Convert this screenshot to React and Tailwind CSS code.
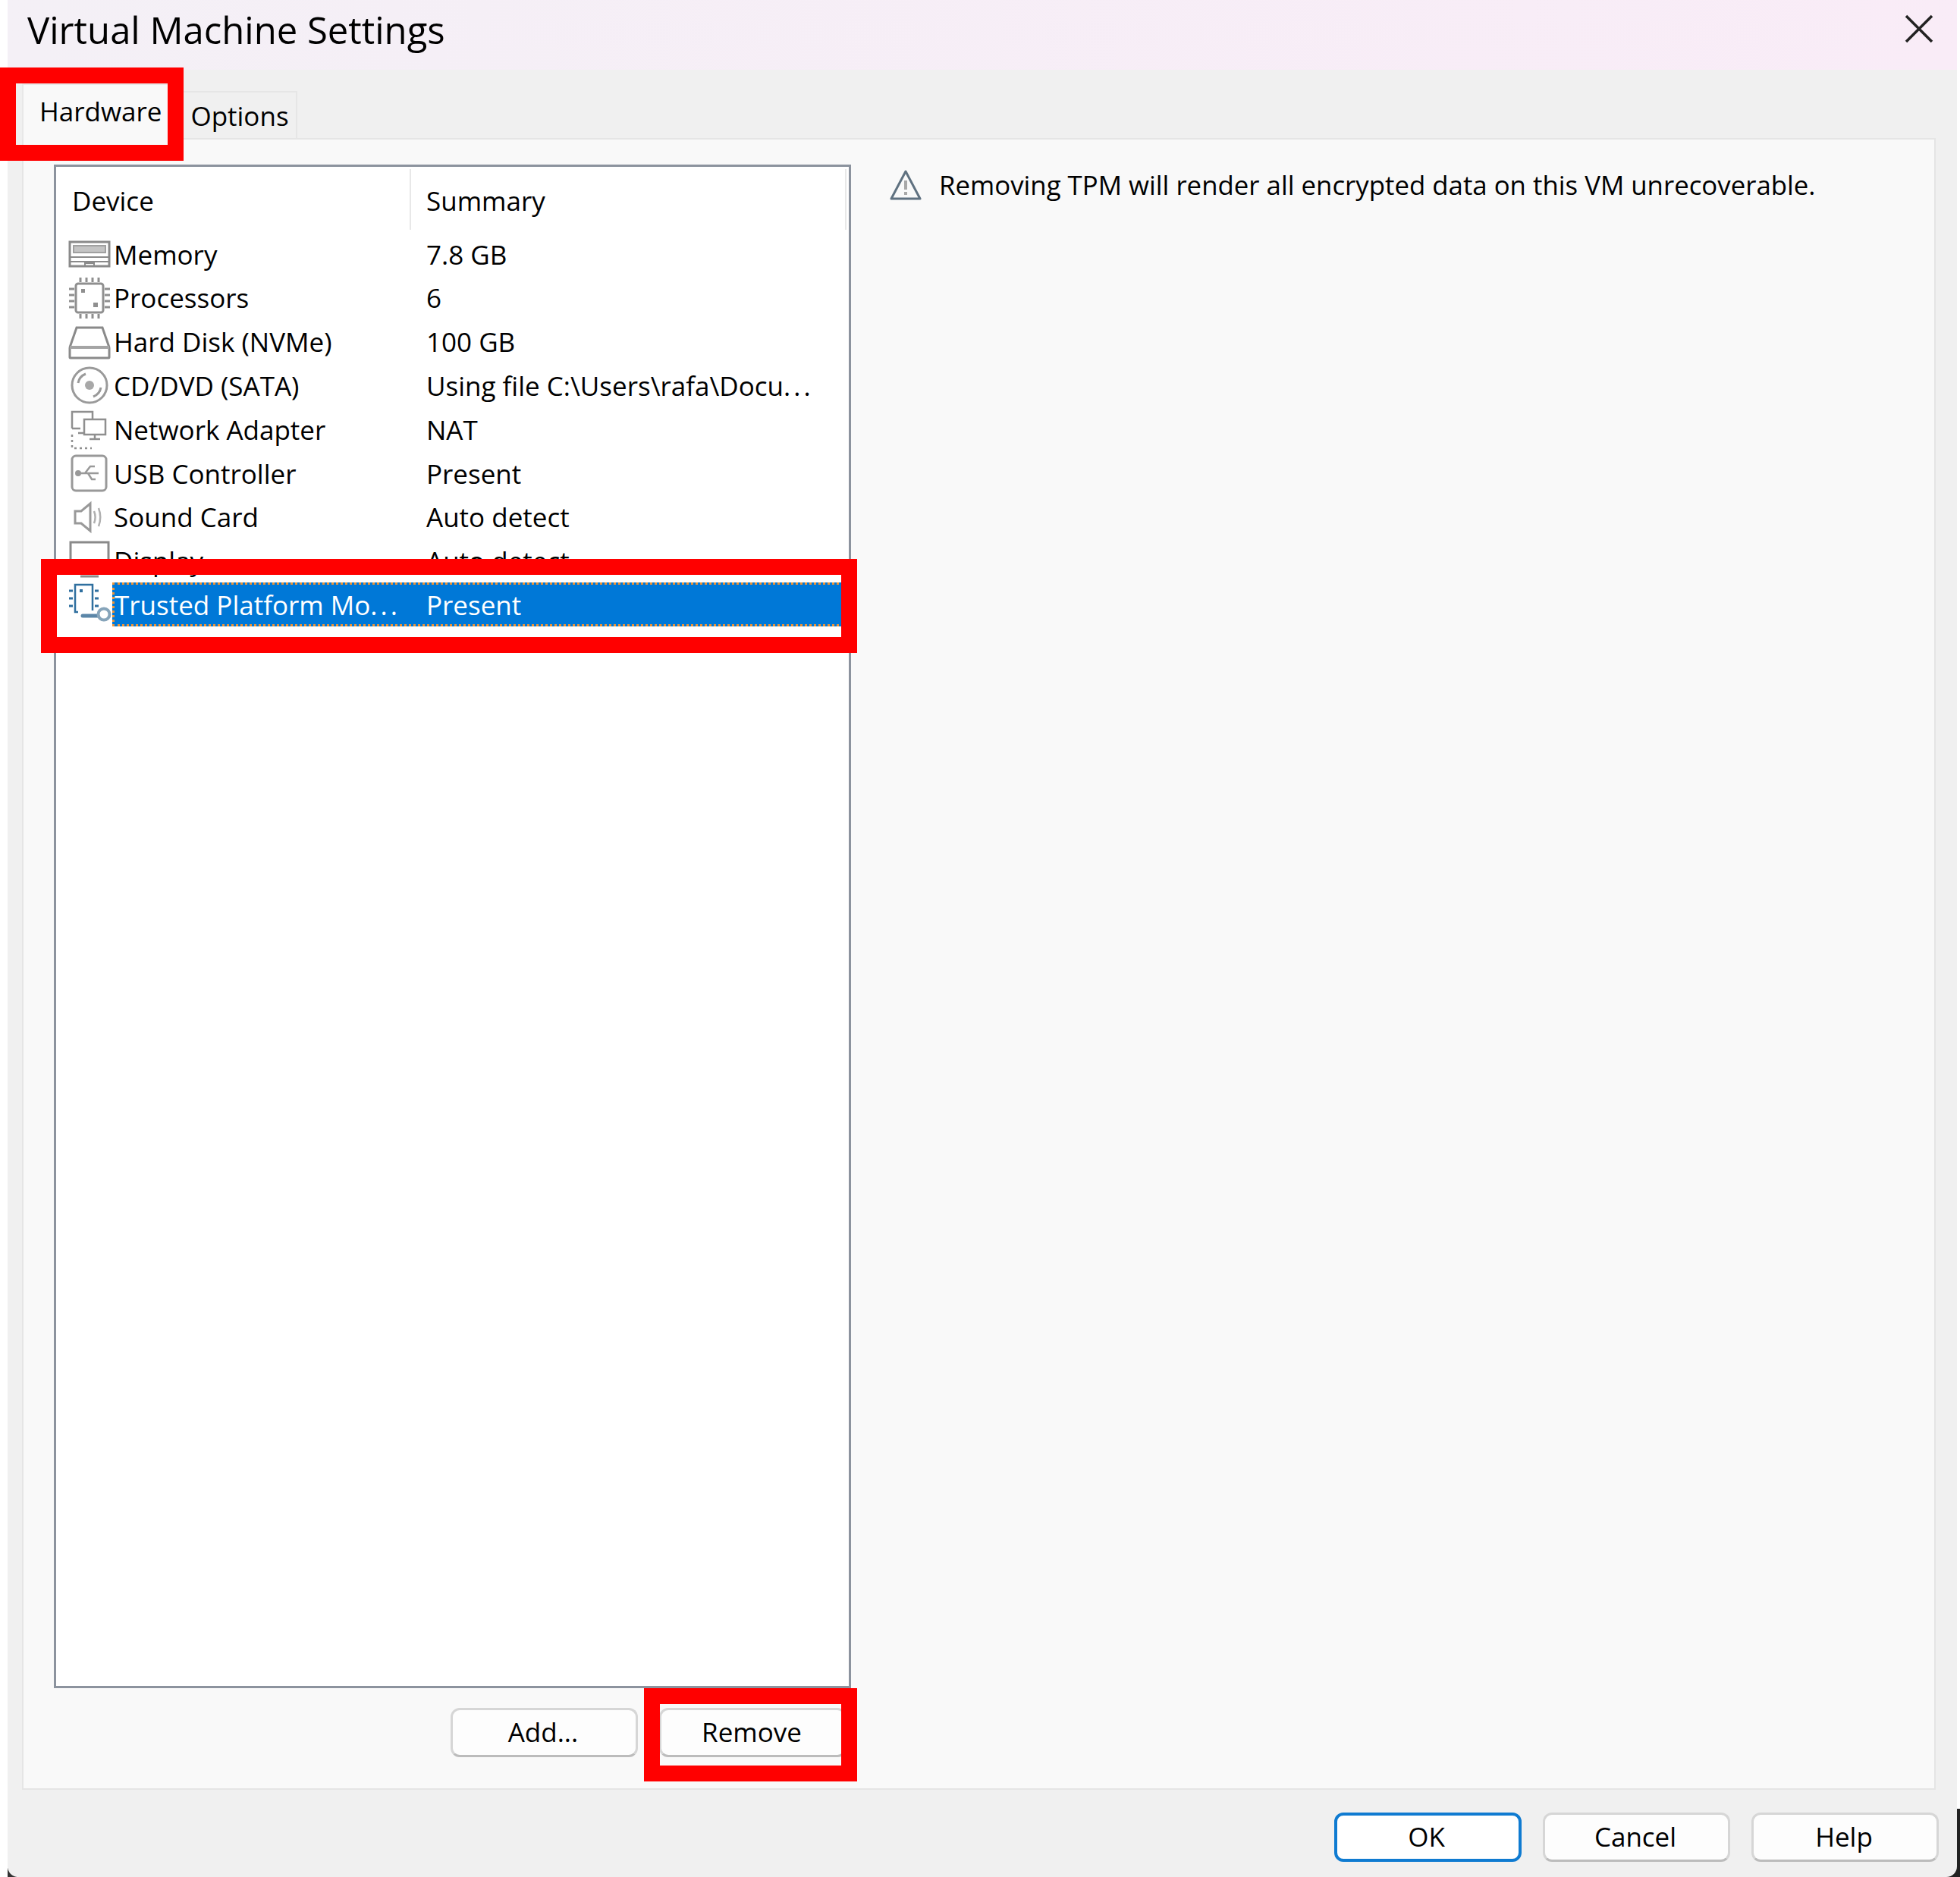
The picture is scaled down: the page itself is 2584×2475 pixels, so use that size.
import React from 'react';

const FONT = "font-['Open_Sans','Noto_Sans',sans-serif]";

const icons = {
  memory: (
    <svg width="56" height="58" viewBox="0 0 56 58" fill="none" stroke="#8a8a8a" strokeWidth="3" className="blur-[0.5px]">
      <rect x="2" y="13" width="52" height="32" />
      <rect x="7" y="18" width="42" height="9" fill="#c4c4c4" stroke="#a0a0a0" strokeWidth="2" />
      <path d="M2 33h52M2 39h52" strokeWidth="2" />
      <path d="M22 45v-4h12v4" strokeWidth="2" />
    </svg>
  ),
  cpu: (
    <svg width="56" height="58" viewBox="0 0 56 58" fill="none" stroke="#8f8f8f" strokeWidth="3" className="blur-[0.5px]">
      <rect x="10" y="10" width="36" height="38" rx="3" />
      <path d="M16 2v6M24 2v6M32 2v6M40 2v6M16 50v6M24 50v6M32 50v6M40 50v6M1 17h7M1 25h7M1 33h7M1 41h7M48 17h7M48 25h7M48 33h7M48 41h7" />
      <rect x="17" y="17" width="5" height="5" fill="#8f8f8f" stroke="none" />
      <rect x="33" y="35" width="6" height="6" fill="#8f8f8f" stroke="none" />
    </svg>
  ),
  disk: (
    <svg width="56" height="58" viewBox="0 0 56 58" fill="none" stroke="#8a8a8a" strokeWidth="3" className="blur-[0.5px]">
      <path d="M2 36 L11 10 H45 L54 36" />
      <rect x="2" y="36" width="52" height="14" rx="1" />
      <path d="M2 36h52" strokeWidth="4" stroke="#a5a5a5" />
    </svg>
  ),
  cd: (
    <svg width="56" height="58" viewBox="0 0 56 58" fill="none" stroke="#9a9a9a" strokeWidth="3" className="blur-[0.5px]">
      <circle cx="28" cy="29" r="23" />
      <circle cx="28" cy="29" r="6" fill="#a8a8a8" stroke="none" />
      <path d="M13 26 C14 20 18 16 23 14M43 32 C42 38 38 42 33 44" />
    </svg>
  ),
  network: (
    <svg width="56" height="58" viewBox="0 0 56 58" fill="none" stroke="#8f8f8f" strokeWidth="2.5" className="blur-[0.4px]">
      <path d="M5 28V6h27v10" />
      <path d="M5 28h11" />
      <path d="M13 34h9" />
      <rect x="21" y="16" width="28" height="20" fill="#fff" />
      <path d="M35 36v5M28 42h14" />
      <path d="M5 36v18h26" strokeDasharray="3 4" />
    </svg>
  ),
  usb: (
    <svg width="56" height="58" viewBox="0 0 56 58" fill="none" stroke="#999" strokeWidth="3" className="blur-[0.5px]">
      <rect x="5" y="6" width="45" height="46" rx="5" />
      <path d="M14 29h26M22 29l7-9h6M26 29l5 8h5" strokeWidth="2.5" />
      <circle cx="13" cy="29" r="2.5" fill="#999" />
    </svg>
  ),
  sound: (
    <svg width="56" height="58" viewBox="0 0 56 58" fill="none" stroke="#999" strokeWidth="3" className="blur-[0.5px]">
      <path d="M9 21h8L29 11v36L17 37H9z" />
      <path d="M34 21c2 5 2 11 0 16M40 17c3 8 3 16 0 24" strokeWidth="2.5" stroke="#b0b0b0" />
    </svg>
  ),
  display: (
    <svg width="56" height="58" viewBox="0 0 56 58" fill="none" stroke="#8a8a8a" strokeWidth="3" className="blur-[0.5px]">
      <rect x="3" y="5" width="50" height="38" />
      <path d="M16 50h24" />
    </svg>
  ),
  tpm: (
    <svg width="58" height="58" viewBox="0 0 58 58" fill="none" stroke="#2f6f9f" strokeWidth="2.5" className="blur-[0.4px]">
      <path d="M13 39H9V3h23v34" />
      <rect x="15" y="9" width="4" height="4" fill="#2f6f9f" stroke="none" />
      <path d="M1 11h5M1 21h5M1 31h5M35 11h5M35 21h5M35 31h5" strokeWidth="3" />
      <path d="M19 44h20" strokeWidth="5" stroke="#5b86a8" strokeLinecap="round" />
      <circle cx="47" cy="42" r="7.5" stroke="#86a4ba" strokeWidth="4" />
    </svg>
  ),
};

const Dots = () => <span className="tracking-[4px]">...</span>;

const devices = [
  { icon: 'memory', name: 'Memory', summary: '7.8 GB' },
  { icon: 'cpu', name: 'Processors', summary: '6' },
  { icon: 'disk', name: 'Hard Disk (NVMe)', summary: '100 GB' },
  { icon: 'cd', name: 'CD/DVD (SATA)', summary: <>Using file C:\Users\rafa\Docu<Dots /></> },
  { icon: 'network', name: 'Network Adapter', summary: 'NAT' },
  { icon: 'usb', name: 'USB Controller', summary: 'Present' },
  { icon: 'sound', name: 'Sound Card', summary: 'Auto detect' },
  { icon: 'display', name: 'Display', summary: 'Auto detect' },
  { icon: 'tpm', name: <>Trusted Platform Mo<Dots /></>, summary: 'Present', selected: true },
];

const Button = ({ children, primary }) => (
  <button
    className={
      primary
        ? 'w-[247px] h-[65px] rounded-[12px] border-[4px] border-[#0f7bd1] bg-white pr-[4px] text-[35px] text-black'
        : 'w-[247px] h-[65px] rounded-[12px] border-[3px] border-[#d6d6d6] border-b-[#bcbcbc] bg-[#fdfdfd] pr-[3px] text-[35px] text-black'
    }
  >
    {children}
  </button>
);

const DeviceRow = ({ device }) => (
  <div className="flex h-[57.8px] items-stretch pl-[16px]">
    <div className="flex w-[58px] shrink-0 items-center">{icons[device.icon]}</div>
    {device.selected ? (
      <div className="flex flex-1 items-center border-[3px] border-dotted border-[#ee9437] bg-[#0078d7] pt-[1px] text-white">
        <span className="w-[411px] shrink-0">{device.name}</span>
        <span>{device.summary}</span>
      </div>
    ) : (
      <div className="flex flex-1 items-center pl-[2px] pt-[2px]">
        <span className="w-[412px] shrink-0">{device.name}</span>
        <span>{device.summary}</span>
      </div>
    )}
  </div>
);

export default function App() {
  return (
    <div className={`relative flex h-[2475px] w-[2584px] overflow-hidden bg-white text-black ${FONT}`}>
      {/* window shadow at the bottom corners, behind the window */}
      <div className="absolute bottom-0 right-0 h-[90px] w-[24px] bg-[#222]" />
      <div className="absolute bottom-0 left-[10px] h-[12px] w-[12px] bg-[#333]" />

      <div className="relative ml-[10px] flex h-full w-[2570px] flex-col rounded-b-[14px] bg-[#f0f0f0]">
        {/* title bar */}
        <div className="flex h-[92px] shrink-0 items-center justify-between bg-gradient-to-r from-[#f4f0f6] to-[#f9ecf7] pb-[12px] pl-[26px] pr-[30px]">
          <span className="text-[49px]">Virtual Machine Settings</span>
          <svg width="40" height="40" viewBox="0 0 40 40" stroke="#222" strokeWidth="3.5" className="-mt-[4px]">
            <path d="M3 3l34 34M37 3L3 37" />
          </svg>
        </div>

        {/* tabs */}
        <div className="relative -mb-[2px] flex h-[92px] shrink-0 items-end pl-[19px] text-[35px]">
          <div className="flex h-[74px] w-[213px] items-center border-x-2 border-t-2 border-[#e8e8e8] border-b-0 bg-[#f9f9f9] pb-[2px] pl-[21px]">
            Hardware
          </div>
          <div className="mb-[2px] flex h-[62px] w-[150px] items-center justify-center border-r-2 border-t-2 border-[#e6e6e6] pt-[2px]">
            Options
          </div>
        </div>

        {/* panel */}
        <div className="ml-[19px] flex h-[2178px] w-[2523px] shrink-0 border-2 border-[#e5e5e5] bg-[#f9f9f9] pl-[40px] pt-[33px] text-[35px]">
          <div className="w-[1051px] shrink-0">
            <div className="h-[2009px] overflow-hidden border-[3px] border-[#8c939e] bg-white">
              <div className="flex h-[86px] items-center">
                <div className="flex h-[80px] w-[468px] items-center border-r-2 border-[#e8e8e8] pl-[21px] pt-[4px]">Device</div>
                <div className="mr-[3px] flex h-[80px] flex-1 items-center border-r-2 border-[#e8e8e8] pl-[20px] pt-[4px]">Summary</div>
              </div>
              {devices.map((device) => (
                <DeviceRow key={device.icon} device={device} />
              ))}
            </div>
            <div className="mt-[26px] flex justify-end gap-[28px] pr-[6px]">
              <Button>Add...</Button>
              <Button>Remove</Button>
            </div>
          </div>
          <div className="ml-[50px] mt-[-2px] flex h-[58px] items-center">
            <svg width="44" height="42" viewBox="0 0 44 42" fill="none" className="blur-[0.4px]">
              <path d="M22 3L41 39H3z" stroke="#5f7180" strokeWidth="3" strokeLinejoin="round" />
              <path d="M22 15v12" stroke="#a8a8a8" strokeWidth="4" />
              <path d="M22 30v4" stroke="#a8a8a8" strokeWidth="4" />
            </svg>
            <span className="ml-[22px] text-[34.8px]">Removing TPM will render all encrypted data on this VM unrecoverable.</span>
          </div>
        </div>

        {/* dialog buttons */}
        <div className="flex flex-1 justify-end gap-[28px] pr-[24px] pt-[30px]">
          <Button primary>OK</Button>
          <Button>Cancel</Button>
          <Button>Help</Button>
        </div>
      </div>

      {/* red annotation boxes */}
      <div className="absolute left-0 top-[89px] h-[123px] w-[242px] border-[21px] border-[#ff0000]" />
      <div className="absolute left-[54px] top-[737px] h-[124px] w-[1076px] border-[21px] border-[#ff0000]" />
      <div className="absolute left-[849px] top-[2226px] h-[123px] w-[281px] border-[21px] border-[#ff0000]" />
    </div>
  );
}
